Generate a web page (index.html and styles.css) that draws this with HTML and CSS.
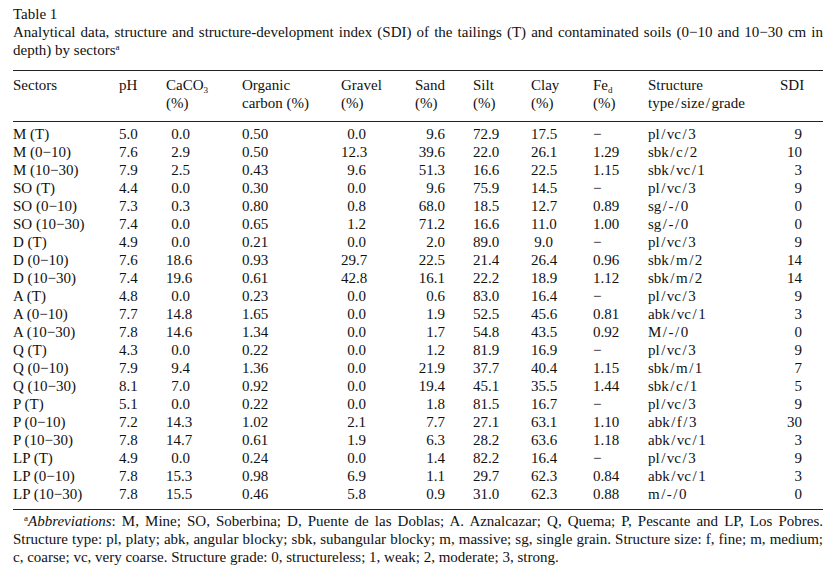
FILE: index.html
```html
<!DOCTYPE html>
<html>
<head>
<meta charset="utf-8">
<link rel="stylesheet" href="styles.css">
</head>
<body>
<div class="page">
  <div class="caption">
    <div class="label">Table 1</div>
    <div class="jline">Analytical data, structure and structure-development index (SDI) of the tailings (T) and contaminated soils (0&minus;10 and 10&minus;30 cm in</div>
    <div class="line">depth) by sectors<sup class="sup">a</sup></div>
  </div>
  <table class="data">
    <colgroup>
      <col class="c1"><col class="c2"><col class="c3"><col class="c4"><col class="c5"><col class="c6"><col class="c7"><col class="c8"><col class="c9"><col class="c10"><col class="c11">
    </colgroup>
    <thead>
      <tr>
        <th>Sectors</th>
        <th>pH</th>
        <th>CaCO<sub class="sub">3</sub><br>(%)</th>
        <th>Organic<br>carbon (%)</th>
        <th>Gravel<br>(%)</th>
        <th>Sand<br>(%)</th>
        <th>Silt<br>(%)</th>
        <th>Clay<br>(%)</th>
        <th>Fe<sub class="sub">d</sub><br>(%)</th>
        <th>Structure<br>type<span class="sl">/</span>size<span class="sl">/</span>grade</th>
        <th>SDI</th>
      </tr>
    </thead>
    <tbody>
      <tr><td>M (T)</td><td class="ph">5.0</td><td class="ca">0.0</td><td>0.50</td><td class="gr">0.0</td><td class="sa">9.6</td><td class="si">72.9</td><td class="cl">17.5</td><td>&minus;</td><td>pl<span class="sl">/</span>vc<span class="sl">/</span>3</td><td class="sdi">9</td></tr>
      <tr><td>M (0&minus;10)</td><td class="ph">7.6</td><td class="ca">2.9</td><td>0.50</td><td class="gr">12.3</td><td class="sa">39.6</td><td class="si">22.0</td><td class="cl">26.1</td><td>1.29</td><td>sbk<span class="sl">/</span>c<span class="sl">/</span>2</td><td class="sdi">10</td></tr>
      <tr><td>M (10&minus;30)</td><td class="ph">7.9</td><td class="ca">2.5</td><td>0.43</td><td class="gr">9.6</td><td class="sa">51.3</td><td class="si">16.6</td><td class="cl">22.5</td><td>1.15</td><td>sbk<span class="sl">/</span>vc<span class="sl">/</span>1</td><td class="sdi">3</td></tr>
      <tr><td>SO (T)</td><td class="ph">4.4</td><td class="ca">0.0</td><td>0.30</td><td class="gr">0.0</td><td class="sa">9.6</td><td class="si">75.9</td><td class="cl">14.5</td><td>&minus;</td><td>pl<span class="sl">/</span>vc<span class="sl">/</span>3</td><td class="sdi">9</td></tr>
      <tr><td>SO (0&minus;10)</td><td class="ph">7.3</td><td class="ca">0.3</td><td>0.80</td><td class="gr">0.8</td><td class="sa">68.0</td><td class="si">18.5</td><td class="cl">12.7</td><td>0.89</td><td>sg<span class="sl">/</span>-<span class="sl">/</span>0</td><td class="sdi">0</td></tr>
      <tr><td>SO (10&minus;30)</td><td class="ph">7.4</td><td class="ca">0.0</td><td>0.65</td><td class="gr">1.2</td><td class="sa">71.2</td><td class="si">16.6</td><td class="cl">11.0</td><td>1.00</td><td>sg<span class="sl">/</span>-<span class="sl">/</span>0</td><td class="sdi">0</td></tr>
      <tr><td>D (T)</td><td class="ph">4.9</td><td class="ca">0.0</td><td>0.21</td><td class="gr">0.0</td><td class="sa">2.0</td><td class="si">89.0</td><td class="cl">9.0</td><td>&minus;</td><td>pl<span class="sl">/</span>vc<span class="sl">/</span>3</td><td class="sdi">9</td></tr>
      <tr><td>D (0&minus;10)</td><td class="ph">7.6</td><td class="ca">18.6</td><td>0.93</td><td class="gr">29.7</td><td class="sa">22.5</td><td class="si">21.4</td><td class="cl">26.4</td><td>0.96</td><td>sbk<span class="sl">/</span>m<span class="sl">/</span>2</td><td class="sdi">14</td></tr>
      <tr><td>D (10&minus;30)</td><td class="ph">7.4</td><td class="ca">19.6</td><td>0.61</td><td class="gr">42.8</td><td class="sa">16.1</td><td class="si">22.2</td><td class="cl">18.9</td><td>1.12</td><td>sbk<span class="sl">/</span>m<span class="sl">/</span>2</td><td class="sdi">14</td></tr>
      <tr><td>A (T)</td><td class="ph">4.8</td><td class="ca">0.0</td><td>0.23</td><td class="gr">0.0</td><td class="sa">0.6</td><td class="si">83.0</td><td class="cl">16.4</td><td>&minus;</td><td>pl<span class="sl">/</span>vc<span class="sl">/</span>3</td><td class="sdi">9</td></tr>
      <tr><td>A (0&minus;10)</td><td class="ph">7.7</td><td class="ca">14.8</td><td>1.65</td><td class="gr">0.0</td><td class="sa">1.9</td><td class="si">52.5</td><td class="cl">45.6</td><td>0.81</td><td>abk<span class="sl">/</span>vc<span class="sl">/</span>1</td><td class="sdi">3</td></tr>
      <tr><td>A (10&minus;30)</td><td class="ph">7.8</td><td class="ca">14.6</td><td>1.34</td><td class="gr">0.0</td><td class="sa">1.7</td><td class="si">54.8</td><td class="cl">43.5</td><td>0.92</td><td>M<span class="sl">/</span>-<span class="sl">/</span>0</td><td class="sdi">0</td></tr>
      <tr><td>Q (T)</td><td class="ph">4.3</td><td class="ca">0.0</td><td>0.22</td><td class="gr">0.0</td><td class="sa">1.2</td><td class="si">81.9</td><td class="cl">16.9</td><td>&minus;</td><td>pl<span class="sl">/</span>vc<span class="sl">/</span>3</td><td class="sdi">9</td></tr>
      <tr><td>Q (0&minus;10)</td><td class="ph">7.9</td><td class="ca">9.4</td><td>1.36</td><td class="gr">0.0</td><td class="sa">21.9</td><td class="si">37.7</td><td class="cl">40.4</td><td>1.15</td><td>sbk<span class="sl">/</span>m<span class="sl">/</span>1</td><td class="sdi">7</td></tr>
      <tr><td>Q (10&minus;30)</td><td class="ph">8.1</td><td class="ca">7.0</td><td>0.92</td><td class="gr">0.0</td><td class="sa">19.4</td><td class="si">45.1</td><td class="cl">35.5</td><td>1.44</td><td>sbk<span class="sl">/</span>c<span class="sl">/</span>1</td><td class="sdi">5</td></tr>
      <tr><td>P (T)</td><td class="ph">5.1</td><td class="ca">0.0</td><td>0.22</td><td class="gr">0.0</td><td class="sa">1.8</td><td class="si">81.5</td><td class="cl">16.7</td><td>&minus;</td><td>pl<span class="sl">/</span>vc<span class="sl">/</span>3</td><td class="sdi">9</td></tr>
      <tr><td>P (0&minus;10)</td><td class="ph">7.2</td><td class="ca">14.3</td><td>1.02</td><td class="gr">2.1</td><td class="sa">7.7</td><td class="si">27.1</td><td class="cl">63.1</td><td>1.10</td><td>abk<span class="sl">/</span>f<span class="sl">/</span>3</td><td class="sdi">30</td></tr>
      <tr><td>P (10&minus;30)</td><td class="ph">7.8</td><td class="ca">14.7</td><td>0.61</td><td class="gr">1.9</td><td class="sa">6.3</td><td class="si">28.2</td><td class="cl">63.6</td><td>1.18</td><td>abk<span class="sl">/</span>vc<span class="sl">/</span>1</td><td class="sdi">3</td></tr>
      <tr><td>LP (T)</td><td class="ph">4.9</td><td class="ca">0.0</td><td>0.24</td><td class="gr">0.0</td><td class="sa">1.4</td><td class="si">82.2</td><td class="cl">16.4</td><td>&minus;</td><td>pl<span class="sl">/</span>vc<span class="sl">/</span>3</td><td class="sdi">9</td></tr>
      <tr><td>LP (0&minus;10)</td><td class="ph">7.8</td><td class="ca">15.3</td><td>0.98</td><td class="gr">6.9</td><td class="sa">1.1</td><td class="si">29.7</td><td class="cl">62.3</td><td>0.84</td><td>abk<span class="sl">/</span>vc<span class="sl">/</span>1</td><td class="sdi">3</td></tr>
      <tr><td>LP (10&minus;30)</td><td class="ph">7.8</td><td class="ca">15.5</td><td>0.46</td><td class="gr">5.8</td><td class="sa">0.9</td><td class="si">31.0</td><td class="cl">62.3</td><td>0.88</td><td>m<span class="sl">/</span>-<span class="sl">/</span>0</td><td class="sdi">0</td></tr>
    </tbody>
  </table>
  <div class="foot">
    <div class="jline indent"><sup class="sup">a</sup><i>Abbreviations</i>: M, Mine; SO, Soberbina; D, Puente de las Doblas; A. Aznalcazar; Q, Quema; P, Pescante and LP, Los Pobres.</div>
    <div class="jline">Structure type: pl, platy; abk, angular blocky; sbk, subangular blocky; m, massive; sg, single grain. Structure size: f, fine; m, medium;</div>
    <div class="line">c, coarse; vc, very coarse. Structure grade: 0, structureless; 1, weak; 2, moderate; 3, strong.</div>
  </div>
</div>
</body>
</html>
```
FILE: styles.css
```css
html, body {
  margin: 0;
  padding: 0;
  background: #ffffff;
}
.page {
  width: 810px;
  padding: 5px 15px 0 13px;
  font-family: "Liberation Serif", "Times New Roman", serif;
  font-size: 15px;
  line-height: 18px;
  color: #111111;
}
.jline {
  text-align: justify;
  text-align-last: justify;
  white-space: nowrap;
}
.line {
  text-align: left;
}
.indent {
  padding-left: 11px;
}
.sup {
  font-size: 9px;
  line-height: 0;
  vertical-align: 5px;
}
.sub {
  font-size: 9px;
  line-height: 0;
  vertical-align: -3px;
}
.sl {
  margin: 0 1.5px;
}
.caption {
  margin-bottom: 11px;
}
.data {
  width: 810px;
  table-layout: fixed;
  border-collapse: collapse;
  border-top: 1px solid #222222;
  border-bottom: 1px solid #222222;
}
.c1 { width: 106px; }
.c2 { width: 47px; }
.c3 { width: 76px; }
.c4 { width: 99px; }
.c5 { width: 74px; }
.c6 { width: 58px; }
.c7 { width: 58px; }
.c8 { width: 62px; }
.c9 { width: 55px; }
.c10 { width: 132px; }
.c11 { width: 43px; }
.data th {
  font-weight: normal;
  text-align: left;
  vertical-align: top;
  padding: 5px 0 9px 0;
  white-space: nowrap;
}
.data thead tr {
  border-bottom: 1px solid #222222;
}
.data td {
  padding: 0;
  white-space: nowrap;
  text-align: left;
}
.data tbody tr:first-child td {
  padding-top: 3px;
}
.data tbody tr:last-child td {
  padding-bottom: 6px;
}
.data td.ph { text-align: right; padding-right: 34px; }
.data td.ca { text-align: right; padding-right: 52px; }
.data td.gr { text-align: right; padding-right: 49px; }
.data td.sa { text-align: right; padding-right: 28px; }
.data td.si { text-align: left; }
.data td.cl { text-align: right; padding-right: 40px; }
.data td.sdi { text-align: right; padding-right: 21px; }
.foot {
  padding-top: 2px;
}
```
